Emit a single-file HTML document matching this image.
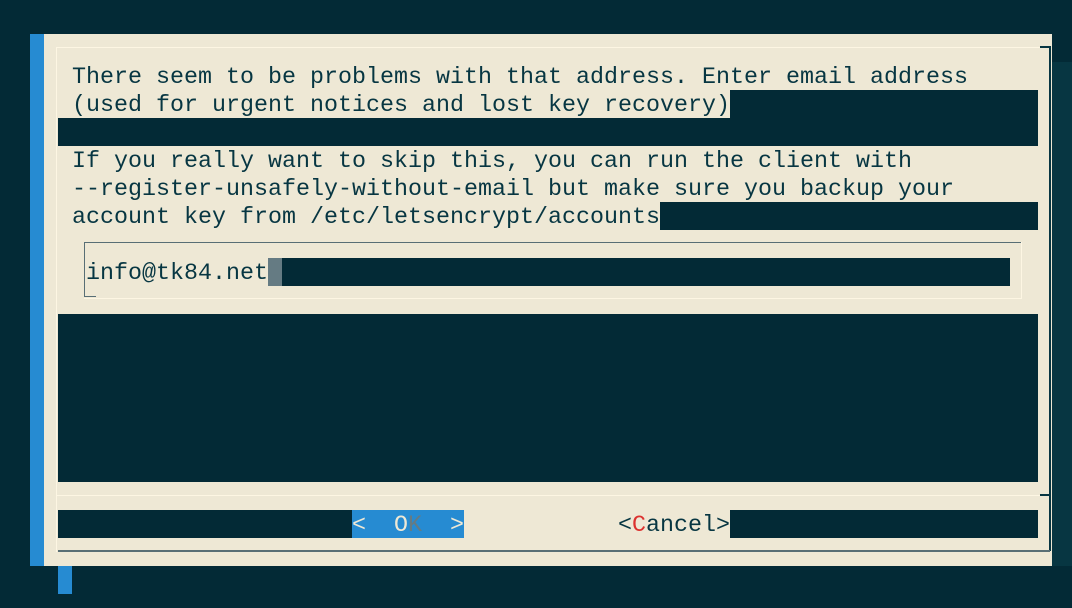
<!DOCTYPE html>
<html><head><meta charset="utf-8"><style>
html,body{margin:0;padding:0;}
body{width:1072px;height:608px;background:#032a36;position:relative;overflow:hidden;font-family:"Liberation Mono","DejaVu Sans Mono",monospace;}
div{position:absolute;}
.t{font-size:23.33px;line-height:28px;color:#073642;white-space:pre;}
.d{background:#032a36;}
</style></head><body>
<div style="left:1052px;top:62px;width:20px;height:504px;background:#073642"></div>
<div style="left:30px;top:34px;width:1022px;height:532px;background:#eee8d5"></div>
<div style="left:30px;top:34px;width:14px;height:532px;background:#268bd2"></div>
<div style="left:58px;top:566px;width:14px;height:28px;background:#268bd2"></div>
<!-- borders -->
<div style="left:56px;top:47px;width:990px;height:1px;background:#fdf6e3"></div>
<div style="left:56px;top:47px;width:1px;height:505px;background:#fdf6e3"></div>
<div style="left:1040px;top:46px;width:10px;height:2px;background:#073642"></div>
<div style="left:1049px;top:46px;width:2px;height:505px;background:#073642"></div>
<div style="left:56px;top:495px;width:990px;height:1px;background:#fdf6e3"></div>
<div style="left:1040px;top:494px;width:10px;height:2px;background:#073642"></div>
<div style="left:58px;top:550px;width:992px;height:2px;background:#586e75"></div>
<!-- dark fills -->
<div class="d" style="left:730px;top:90px;width:308px;height:28px"></div>
<div class="d" style="left:58px;top:118px;width:980px;height:28px"></div>
<div class="d" style="left:660px;top:202px;width:378px;height:28px"></div>
<div class="d" style="left:58px;top:314px;width:980px;height:168px"></div>
<div class="d" style="left:58px;top:510px;width:294px;height:28px"></div>
<div class="d" style="left:730px;top:510px;width:308px;height:28px"></div>
<!-- text -->
<div class="t" style="left:72px;top:64px">There seem to be problems with that address. Enter email address</div>
<div class="t" style="left:72px;top:92px">(used for urgent notices and lost key recovery)</div>
<div class="t" style="left:72px;top:148px">If you really want to skip this, you can run the client with
--register-unsafely-without-email but make sure you backup your
account key from /etc/letsencrypt/accounts</div>
<!-- input box -->
<div style="left:84px;top:242px;width:938px;height:1px;background:#586e75"></div>
<div style="left:84px;top:242px;width:1px;height:55px;background:#586e75"></div>
<div style="left:84px;top:298px;width:938px;height:1px;background:#fdf6e3"></div>
<div style="left:1021px;top:242px;width:1px;height:57px;background:#fdf6e3"></div>
<div style="left:84px;top:296px;width:12px;height:1px;background:#586e75"></div>
<div class="t" style="left:86px;top:260px">info@tk84.net</div>
<div style="left:268px;top:258px;width:14px;height:28px;background:#657b83"></div>
<div class="d" style="left:282px;top:258px;width:728px;height:28px"></div>
<!-- buttons -->
<div style="left:352px;top:510px;width:112px;height:28px;background:#268bd2"></div>
<div class="t" style="left:352px;top:512px;color:#eee8d5">&lt;  O<span style="color:#657b83">K</span>  &gt;</div>
<div class="t" style="left:618px;top:512px">&lt;<span style="color:#dc322f">C</span>ancel&gt;</div>
</body></html>
